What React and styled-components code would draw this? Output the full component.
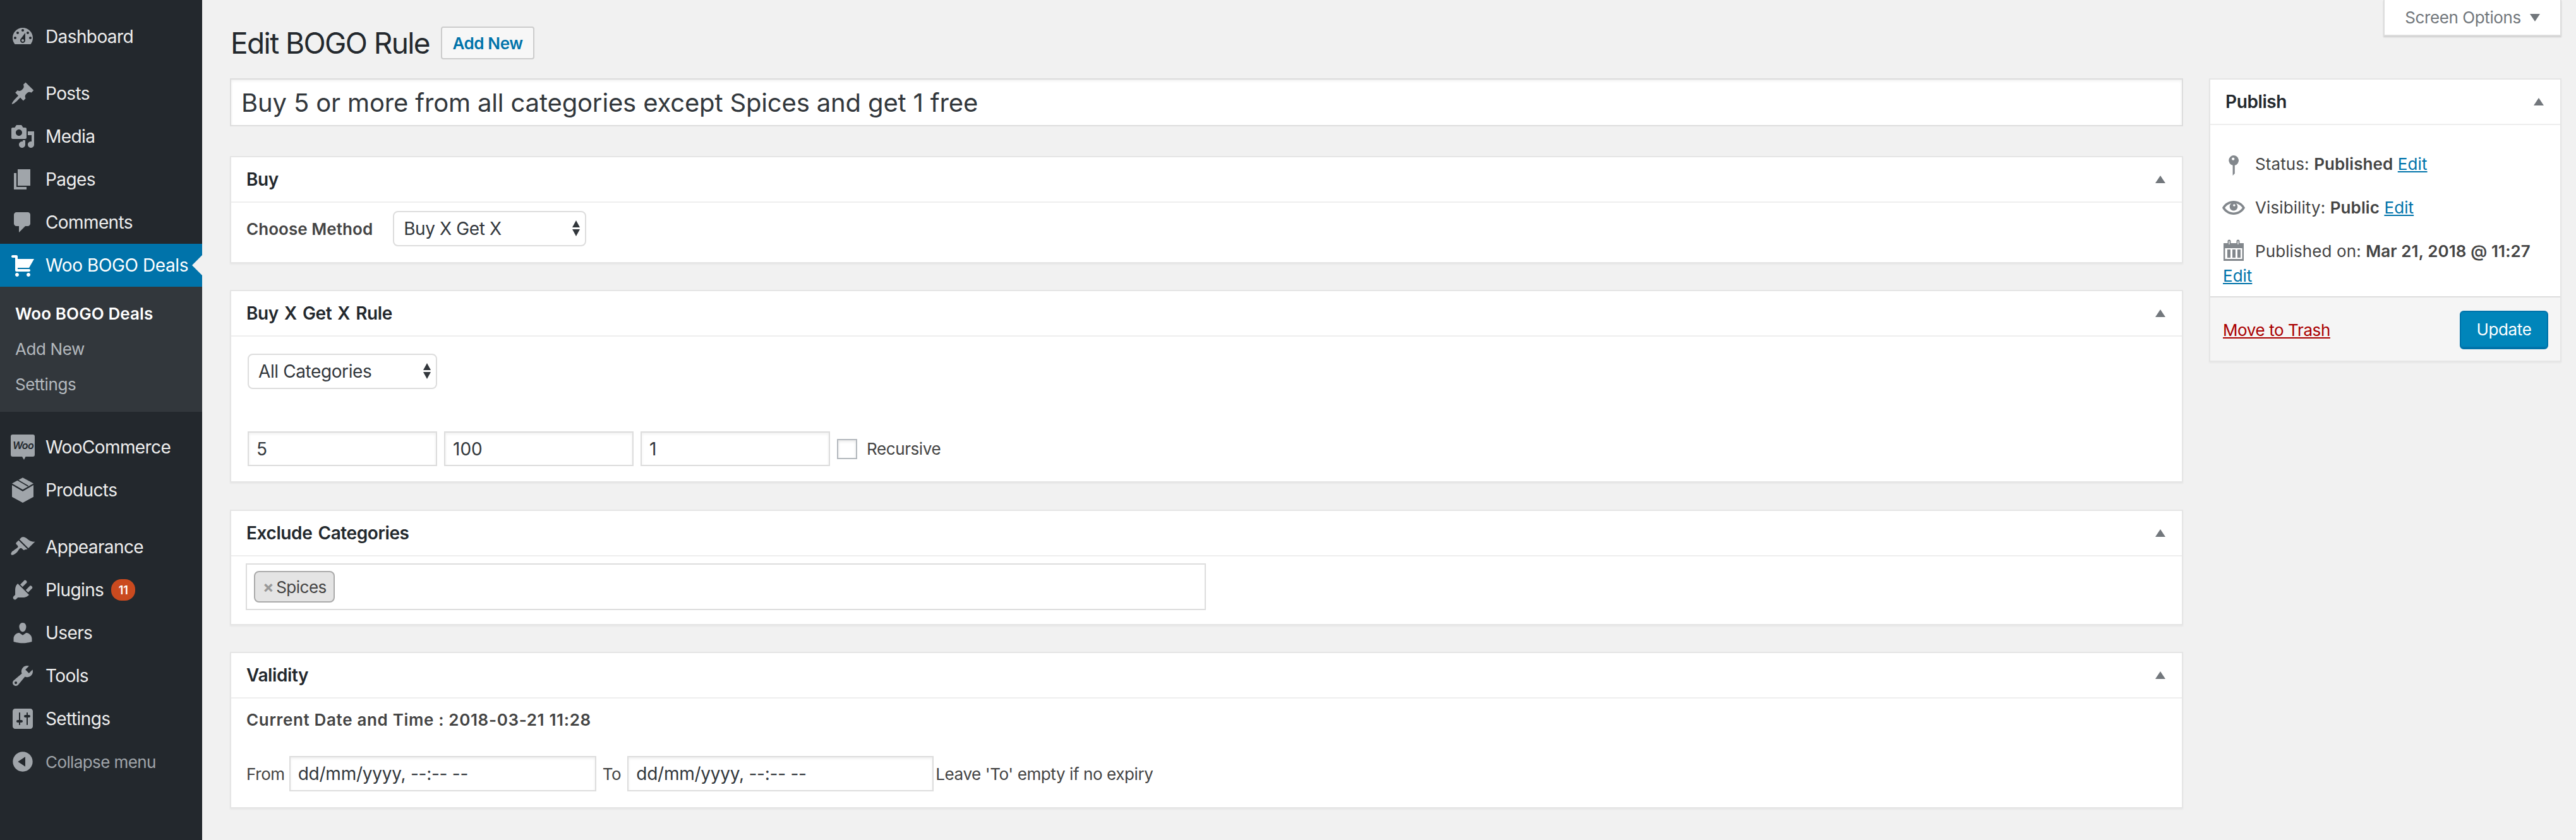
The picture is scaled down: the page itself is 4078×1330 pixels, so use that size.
import styled, { createGlobalStyle } from "styled-components";

const GlobalStyle = createGlobalStyle`
  html, body {
    margin: 0;
    padding: 0;
    background: #f1f1f1;
  }
  * {
    box-sizing: border-box;
  }
  body {
    font-family: Inter, "Liberation Sans", sans-serif;
    font-size: 26px;
    color: #444;
  }
`;

const Page = styled.div`
  display: flex;
  width: 4078px;
  height: 1330px;
  overflow: hidden;
`;

const Sidebar = styled.nav`
  flex: 0 0 320px;
  background: #23282d;
  padding-top: 24px;
`;

const MenuGroup = styled.div`
  margin-bottom: 22px;
`;

const MenuItem = styled.div`
  position: relative;
  display: flex;
  align-items: center;
  height: 68px;
  padding-left: 16px;
  font-size: ${(props) => (props.$muted ? 26 : 28)}px;
  letter-spacing: ${(props) => (props.$active ? "-0.4px" : "-0.6px")};
  color: ${(props) => (props.$active ? "#fff" : props.$muted ? "#a0a5aa" : "#eee")};
  background: ${(props) => (props.$active ? "#0073aa" : "transparent")};
`;

const MenuIcon = styled.svg`
  flex: 0 0 40px;
  width: 40px;
  height: 40px;
  margin-right: 16px;
  fill: ${(props) => (props.$active ? "#fff" : "#a0a5aa")};
`;

const ActiveArrow = styled.span`
  position: absolute;
  right: 0;
  top: 18px;
  border: 16px solid transparent;
  border-right-color: #f1f1f1;
  border-left-width: 0;
`;

const Badge = styled.span`
  display: inline-flex;
  align-items: center;
  justify-content: center;
  width: 38px;
  height: 34px;
  margin-left: 12px;
  border-radius: 16px;
  background: #ca4a1f;
  color: #fff;
  font-size: 18px;
  font-weight: 600;
  letter-spacing: 0;
`;

const Submenu = styled.div`
  background: #32373c;
  padding: 14px 0 16px;
  margin-bottom: 22px;
`;

const SubItem = styled.div`
  display: flex;
  align-items: center;
  height: 56px;
  padding-left: 24px;
  font-size: 26px;
  letter-spacing: ${(props) => (props.$current ? "0.1px" : "-0.4px")};
  font-weight: ${(props) => (props.$current ? 600 : 400)};
  color: ${(props) => (props.$current ? "#fff" : "#b4b9be")};
`;

const Content = styled.main`
  position: relative;
  flex: 1;
  padding: 0 23px 0 44px;
`;

const ScreenOptions = styled.div`
  position: absolute;
  top: 0;
  right: 23px;
  width: 282px;
  height: 57px;
  display: flex;
  align-items: center;
  justify-content: center;
  gap: 14px;
  background: #fff;
  border: 2px solid #ddd;
  border-top: 0;
  box-shadow: 0 2px 2px rgba(0, 0, 0, 0.14);
  color: #72777c;
  font-size: 26px;
  letter-spacing: -0.4px;
`;

const Caret = styled.span`
  width: 0;
  height: 0;
  border-left: 8px solid transparent;
  border-right: 8px solid transparent;
  ${(props) => (props.$up ? "border-bottom" : "border-top")}: 12px solid #72777c;
`;

const TitleRow = styled.div`
  display: flex;
  align-items: center;
  height: 124px;
  padding: 12px 0 0 1px;
`;

const PageTitle = styled.h1`
  margin: 0;
  font-size: 46px;
  font-weight: 400;
  letter-spacing: -1.6px;
  color: #23282d;
`;

const AddNew = styled.a`
  display: flex;
  align-items: center;
  justify-content: center;
  width: 148px;
  height: 52px;
  margin-left: 18px;
  background: #f7f7f7;
  border: 2px solid #ccc;
  border-radius: 4px;
  color: #0073aa;
  font-size: 26px;
  font-weight: 600;
  letter-spacing: -0.4px;
`;

const Columns = styled.div`
  display: flex;
  gap: 41px;
`;

const MainColumn = styled.div`
  flex: 0 0 3092px;
  display: flex;
  flex-direction: column;
`;

const SideColumn = styled.div`
  flex: 1;
`;

const TitleInput = styled.input`
  display: block;
  width: 100%;
  height: 76px;
  margin-bottom: 47px;
  padding: 0 16px;
  background: #fff;
  border: 2px solid #ddd;
  outline: 0;
  box-shadow: inset 0 2px 4px rgba(0, 0, 0, 0.07);
  color: #32373c;
  font-family: inherit;
  font-size: 40px;
  letter-spacing: -0.15px;
`;

const Box = styled.section`
  display: flex;
  flex-direction: column;
  background: #fff;
  border: 2px solid #e5e5e5;
  box-shadow: 0 2px 2px rgba(0, 0, 0, 0.04);
  height: ${(props) => props.$height}px;
  margin-bottom: ${(props) => props.$gap || 0}px;
  color: #444;
`;

const BoxHead = styled.div`
  flex: 0 0 72px;
  display: flex;
  align-items: center;
  justify-content: space-between;
  padding: 0 26px 0 24px;
  border-bottom: 2px solid #eee;
`;

const BoxTitle = styled.h2`
  margin: 0;
  font-size: 28px;
  font-weight: 600;
  letter-spacing: -0.4px;
  word-spacing: 2.5px;
  color: #23282d;
`;

const BoxBody = styled.div`
  flex: 1;
  display: flex;
  flex-direction: column;
  align-items: flex-start;
  padding: ${(props) => props.$pad || "0 24px"};
`;

const FieldRow = styled.div`
  display: flex;
  align-items: center;
  gap: ${(props) => props.$gap || 0}px;
  margin-top: ${(props) => props.$top || 0}px;
`;

const FieldLabel = styled.span`
  font-weight: 600;
  letter-spacing: ${(props) => props.$spacing || "0.05px"};
`;

const PlainLabel = styled.span`
  letter-spacing: -0.4px;
  margin: ${(props) => props.$margin || 0};
`;

const SelectBox = styled.div`
  position: relative;
  display: flex;
  align-items: center;
  width: ${(props) => props.$width}px;
  height: 56px;
  padding-left: 15px;
  background: #fff;
  border: 2px solid #ddd;
  border-radius: 8px;
  color: #32373c;
  font-size: 28px;
  letter-spacing: -0.4px;
`;

const Stepper = styled.span`
  position: absolute;
  right: 8px;
  top: 13px;
  display: flex;
  flex-direction: column;
  gap: 3px;
`;

const StepUp = styled.span`
  border-left: 6px solid transparent;
  border-right: 6px solid transparent;
  border-bottom: 11px solid #32373c;
`;

const StepDown = styled(StepUp)`
  border-bottom: 0;
  border-top: 11px solid #32373c;
`;

const TextField = styled.div`
  display: flex;
  align-items: center;
  width: ${(props) => props.$width}px;
  height: ${(props) => props.$height || 55}px;
  padding-left: 12px;
  background: #fff;
  border: 2px solid #ddd;
  box-shadow: inset 0 2px 4px rgba(0, 0, 0, 0.07);
  color: #32373c;
  font-size: 28px;
  letter-spacing: ${(props) => props.$spacing || 0};
`;

const Checkbox = styled.span`
  width: 32px;
  height: 32px;
  margin: 0 4px 0 0;
  background: #fff;
  border: 2px solid #b4b9be;
  box-shadow: inset 0 2px 4px rgba(0, 0, 0, 0.1);
`;

const TagField = styled.div`
  display: flex;
  align-items: center;
  width: 1520px;
  height: 74px;
  padding-left: 11px;
  background: #fff;
  border: 2px solid #ddd;
`;

const Tag = styled.span`
  display: flex;
  align-items: center;
  height: 50px;
  padding: 0 11px 0 12px;
  background: #e4e4e4;
  border: 2px solid #aaa;
  border-radius: 8px;
  letter-spacing: -0.5px;
  color: #444;
`;

const TagRemove = styled.span`
  margin-right: 4px;
  color: #999;
  font-weight: 700;
`;

const StatusRow = styled.div`
  display: flex;
  align-items: center;
  height: 69px;
  letter-spacing: 0.1px;
`;

const StatusIcon = styled.svg`
  flex: 0 0 40px;
  width: 40px;
  height: 40px;
  margin-right: 14px;
  fill: #82878c;
  fill-rule: evenodd;
`;

const Strong = styled.strong`
  font-weight: 600;
`;

const EditLink = styled.a`
  color: #0073aa;
  text-decoration: underline;
  margin-top: ${(props) => props.$top || 0}px;
  margin-left: ${(props) => props.$left || 0}px;
`;

const PublishFooter = styled.div`
  flex: 0 0 102px;
  display: flex;
  align-items: center;
  justify-content: space-between;
  padding: 3px 19px 0 20px;
  background: #f5f5f5;
  border-top: 2px solid #ddd;
`;

const TrashLink = styled.a`
  color: #a00;
  text-decoration: underline;
  letter-spacing: -0.4px;
`;

const UpdateButton = styled.button`
  width: 140px;
  height: 61px;
  background: #0085ba;
  border: 2px solid #0073aa;
  border-bottom-width: 4px;
  border-radius: 6px;
  color: #fff;
  font-family: inherit;
  font-size: 26px;
  letter-spacing: -0.4px;
`;

const icons = {
  dashboard:
    "M3.76 16h12.48c1.1-1.37 1.76-3.11 1.76-5 0-4.42-3.58-8-8-8s-8 3.58-8 8c0 1.89.66 3.63 1.76 5zM10 4c.55 0 1 .45 1 1s-.45 1-1 1-1-.45-1-1 .45-1 1-1zM6 6c.55 0 1 .45 1 1s-.45 1-1 1-1-.45-1-1 .45-1 1-1zm8 0c.55 0 1 .45 1 1s-.45 1-1 1-1-.45-1-1 .45-1 1-1zm-5.37 5.55L12 7v6c0 1.1-.9 2-2 2s-2-.9-2-2c0-.57.24-1.08.63-1.45zM4 10c.55 0 1 .45 1 1s-.45 1-1 1-1-.45-1-1 .45-1 1-1zm12 0c.55 0 1 .45 1 1s-.45 1-1 1-1-.45-1-1 .45-1 1-1zm-5 3c0-.55-.45-1-1-1s-1 .45-1 1 .45 1 1 1 1-.45 1-1z",
  posts:
    "M10.44 3.02l1.82-1.82 6.36 6.35-1.83 1.82c-1.05-.68-2.48-.57-3.41.36l-.75.75c-.92.93-1.04 2.35-.35 3.41l-1.83 1.82-2.41-2.41-2.8 2.79c-.42.42-3.38 2.71-3.8 2.29s1.86-3.39 2.28-3.81l2.79-2.79L4.1 9.36l1.83-1.82c1.05.69 2.48.57 3.4-.36l.75-.75c.93-.92 1.05-2.35.36-3.41z",
  media:
    "M13 11V4c0-.55-.45-1-1-1h-1.67L9 1H5L3.67 3H2c-.55 0-1 .45-1 1v7c0 .55.45 1 1 1h10c.55 0 1-.45 1-1zM7 4.5c1.38 0 2.5 1.12 2.5 2.5S8.38 9.5 7 9.5 4.5 8.38 4.5 7 5.62 4.5 7 4.5zM14 6h5v10.5c0 1.38-1.12 2.5-2.5 2.5S14 17.88 14 16.5s1.12-2.5 2.5-2.5c.17 0 .34.02.5.05V9h-3V6zm-4 8.05V13h2v3.5c0 1.38-1.12 2.5-2.5 2.5S7 17.88 7 16.5 8.12 14 9.5 14c.17 0 .34.02.5.05z",
  pages: "M6 15V2h10v13H6zm-1 1h8v2H3V5h2v11z",
  comments:
    "M5 2h9c1.1 0 2 .9 2 2v7c0 1.1-.9 2-2 2h-2l-5 5v-5H5c-1.1 0-2-.9-2-2V4c0-1.1.9-2 2-2z",
  cart:
    "M6 13h9c.55 0 1 .45 1 1s-.45 1-1 1H5c-.55 0-1-.45-1-1V4H2c-.55 0-1-.45-1-1s.45-1 1-1h3c.55 0 1 .45 1 1v2h13l-4 7H6v1zm-.5 3c.83 0 1.5.67 1.5 1.5S6.33 19 5.5 19 4 18.33 4 17.5 4.67 16 5.5 16zm9 0c.83 0 1.5.67 1.5 1.5s-.67 1.5-1.5 1.5-1.5-.67-1.5-1.5.67-1.5 1.5-1.5z",
  appearance:
    "M14.48 11.06L7.41 3.99l1.5-1.5c.5-.56 2.3-.47 3.51.32 1.21.8 1.43 1.28 2.91 2.1 1.18.64 2.45 1.26 4.45.85zm-.71.71L6.7 4.7 4.93 6.47c-.39.39-.39 1.02 0 1.41l1.06 1.06c.39.39.39 1.03 0 1.42-.6.6-1.43 1.11-2.21 1.69-.35.26-.7.53-1.01.84C1.43 13.23.18 15.35.97 16.14s2.93-.44 4.27-1.81c.31-.31.58-.65.84-1 .58-.78 1.09-1.61 1.69-2.21.39-.39 1.02-.39 1.41 0l1.06 1.06c.39.39 1.02.39 1.41 0z",
  plugins:
    "M13.11 4.36L9.87 7.6 8 5.73l3.24-3.24c.35-.34 1.05-.2 1.56.32.52.51.66 1.21.31 1.55zm-8 1.77l.91-1.12 9.01 9.01-1.19.84c-.71.71-2.63 1.16-3.82 1.16H6.14L4.9 17.26c-.59.59-1.54.59-2.12 0-.59-.58-.59-1.53 0-2.12l1.24-1.24v-3.88c0-1.13.4-3.19 1.09-3.89zm7.26 3.97l3.24-3.24c.34-.35 1.04-.21 1.55.31.52.51.66 1.21.31 1.55l-3.24 3.25z",
  users:
    "M10 9.25c-2.27 0-2.73-3.44-2.73-3.44C7 4.02 7.82 2 9.97 2c2.16 0 2.98 2.02 2.71 3.81 0 0-.41 3.44-2.68 3.44zm0 2.57L12.72 10c2.39 0 4.52 2.33 4.52 4.53v2.49s-3.65 1.13-7.24 1.13c-3.65 0-7.24-1.13-7.24-1.13v-2.49c0-2.25 1.94-4.48 4.47-4.48z",
  tools:
    "M16.68 9.77c-1.34 1.34-3.3 1.67-4.95.99l-5.41 6.52c-.99.99-2.59.99-3.58 0s-.99-2.59 0-3.57l6.52-5.42c-.68-1.65-.35-3.61.99-4.95 1.28-1.28 3.12-1.62 4.72-1.06l-2.89 2.89 2.82 2.82 2.86-2.87c.53 1.58.18 3.39-1.08 4.65zM3.81 16.21c.4.39 1.04.39 1.43 0 .4-.4.4-1.04 0-1.43-.39-.4-1.03-.4-1.43 0-.39.39-.39 1.03 0 1.43z",
  settings:
    "M18 16V4c0-1.1-.9-2-2-2H4c-1.1 0-2 .9-2 2v12c0 1.1.9 2 2 2h12c1.1 0 2-.9 2-2zM8 11h1c.55 0 1 .45 1 1s-.45 1-1 1H8v1.5c0 .28-.22.5-.5.5s-.5-.22-.5-.5V13H6c-.55 0-1-.45-1-1s.45-1 1-1h1V5.5c0-.28.22-.5.5-.5s.5.22.5.5V11zm5-2h-1c-.55 0-1-.45-1-1s.45-1 1-1h1V5.5c0-.28.22-.5.5-.5s.5.22.5.5V7h1c.55 0 1 .45 1 1s-.45 1-1 1h-1v5.5c0 .28-.22.5-.5.5s-.5-.22-.5-.5V9z",
  collapse:
    "M10 2.16c4.33 0 7.84 3.51 7.84 7.84s-3.51 7.84-7.84 7.84S2.16 14.33 2.16 10 5.71 2.16 10 2.16zm2 11.72V6.12L6.18 9.97z",
  pin: "M10 3a4 4 0 0 1 .9 7.9V17.4L9.3 19V10.9A4 4 0 0 1 10 3zM9.6 4.7a1.1 1.1 0 1 0 0 2.2 1.1 1.1 0 0 0 0-2.2z",
  eye: "M19.7 9.4C17.7 6 14 3.9 10 3.9S2.3 6 .3 9.4L0 10l.3.6c2 3.4 5.7 5.5 9.7 5.5s7.7-2.1 9.7-5.5l.3-.6-.3-.6zM10 14.1c-3.1 0-6-1.6-7.7-4.1C3.6 8 5.7 6.6 8 6.1c-.9.6-1.5 1.7-1.5 2.9 0 1.9 1.6 3.5 3.5 3.5s3.5-1.6 3.5-3.5c0-1.2-.6-2.3-1.5-2.9 2.3.5 4.4 1.9 5.7 3.9-1.7 2.5-4.6 4.1-7.7 4.1zM10.5 6.8a1 1 0 1 0 0 2 1 1 0 0 0 0-2z",
  calendar:
    "M2 3.5H5.25V2a1.25 1.25 0 0 1 2.5 0V3.5H12.25V2a1.25 1.25 0 0 1 2.5 0V3.5H18V17.5H2zM3.2 7.5V16H16.8V7.5zM6.2 2V4.5H6.8V2zM13.2 2V4.5H13.8V2zM5 8.5H7.5V15H5zM9 8.5H11.5V15H9zM13 8.5H15.5V15H13z",
};

const Icon = ({ name, active }) => (
  <MenuIcon viewBox="0 0 20 20" $active={active}>
    <path d={icons[name]} />
  </MenuIcon>
);

const WooIcon = () => (
  <MenuIcon viewBox="0 0 40 40">
    <path d="M4 0h32a3 3 0 0 1 3 3v29a3 3 0 0 1-3 3H24.5L22 40l-3-5H4a3 3 0 0 1-3-3V3a3 3 0 0 1 3-3z" />
    <text
      x="20.5"
      y="23"
      fontSize="16"
      fontWeight="600"
      fontStyle="italic"
      textAnchor="middle"
      fill="#23282d"
    >
      Woo
    </text>
  </MenuIcon>
);

const ProductsIcon = () => (
  <MenuIcon viewBox="0 0 20 20">
    <path d="M10 .1L18.5 4.7 10 9.6 1.5 4.7z" />
    <path d="M1.5 6L10 11 18.5 6V15.4L10 20 1.5 15.4z" />
    <path d="M5.8 1.9L14.3 6.9" stroke="#23282d" strokeWidth="0.8" fill="none" />
  </MenuIcon>
);

const topItems = [
  ["posts", "Posts"],
  ["media", "Media"],
  ["pages", "Pages"],
  ["comments", "Comments"],
];

const lowerItems = [
  ["users", "Users"],
  ["tools", "Tools"],
  ["settings", "Settings"],
];

const BoxHeader = ({ title }) => (
  <BoxHead>
    <BoxTitle>{title}</BoxTitle>
    <Caret $up />
  </BoxHead>
);

const Select = ({ width, label }) => (
  <SelectBox $width={width}>
    {label}
    <Stepper>
      <StepUp />
      <StepDown />
    </Stepper>
  </SelectBox>
);

const App = () => {
  return (
    <Page>
      <GlobalStyle />
      <Sidebar>
        <MenuGroup>
          <MenuItem>
            <Icon name="dashboard" />
            Dashboard
          </MenuItem>
        </MenuGroup>
        {topItems.map(([icon, label]) => (
          <MenuItem key={label}>
            <Icon name={icon} />
            {label}
          </MenuItem>
        ))}
        <MenuItem $active>
          <Icon name="cart" active />
          Woo BOGO Deals
          <ActiveArrow />
        </MenuItem>
        <Submenu>
          <SubItem $current>Woo BOGO Deals</SubItem>
          <SubItem>Add New</SubItem>
          <SubItem>Settings</SubItem>
        </Submenu>
        <MenuItem>
          <WooIcon />
          WooCommerce
        </MenuItem>
        <MenuGroup>
          <MenuItem>
            <ProductsIcon />
            Products
          </MenuItem>
        </MenuGroup>
        <MenuItem>
          <Icon name="appearance" />
          Appearance
        </MenuItem>
        <MenuItem>
          <Icon name="plugins" />
          Plugins
          <Badge>11</Badge>
        </MenuItem>
        {lowerItems.map(([icon, label]) => (
          <MenuItem key={label}>
            <Icon name={icon} />
            {label}
          </MenuItem>
        ))}
        <MenuItem $muted>
          <Icon name="collapse" />
          Collapse menu
        </MenuItem>
      </Sidebar>

      <Content>
        <ScreenOptions>
          Screen Options
          <Caret />
        </ScreenOptions>
        <TitleRow>
          <PageTitle>Edit BOGO Rule</PageTitle>
          <AddNew>Add New</AddNew>
        </TitleRow>
        <Columns>
          <MainColumn>
            <TitleInput readOnly value="Buy 5 or more from all categories except Spices and get 1 free" />

            <Box $height={170} $gap={42}>
              <BoxHeader title="Buy" />
              <BoxBody>
                <FieldRow $top={13} $gap={32}>
                  <FieldLabel>Choose Method</FieldLabel>
                  <Select width={306} label="Buy X Get X" />
                </FieldRow>
              </BoxBody>
            </Box>

            <Box $height={305} $gap={43}>
              <BoxHeader title="Buy X Get X Rule" />
              <BoxBody $pad="27px 26px 0">
                <Select width={300} label="All Categories" />
                <FieldRow $top={67} $gap={11}>
                  <TextField $width={300}>5</TextField>
                  <TextField $width={300}>100</TextField>
                  <TextField $width={300}>1</TextField>
                  <Checkbox />
                  <PlainLabel>Recursive</PlainLabel>
                </FieldRow>
              </BoxBody>
            </Box>

            <Box $height={183} $gap={42}>
              <BoxHeader title="Exclude Categories" />
              <BoxBody $pad="11px 23px 0">
                <TagField>
                  <Tag>
                    <TagRemove>×</TagRemove>
                    Spices
                  </Tag>
                </TagField>
              </BoxBody>
            </Box>

            <Box $height={248}>
              <BoxHeader title="Validity" />
              <BoxBody>
                <FieldRow $top={18}>
                  <FieldLabel $spacing="0.65px">Current Date and Time : 2018-03-21 11:28</FieldLabel>
                </FieldRow>
                <FieldRow $top={42}>
                  <PlainLabel $margin="0 7px 0 0">From</PlainLabel>
                  <TextField $width={486} $height={56} $spacing="-0.25px">
                    dd/mm/yyyy, --:-- --
                  </TextField>
                  <PlainLabel $margin="0 10px">To</PlainLabel>
                  <TextField $width={485} $height={56} $spacing="-0.25px">
                    dd/mm/yyyy, --:-- --
                  </TextField>
                  <PlainLabel $margin="0 0 0 3px">Leave 'To' empty if no expiry</PlainLabel>
                </FieldRow>
              </BoxBody>
            </Box>
          </MainColumn>

          <SideColumn>
            <Box $height={449}>
              <BoxHeader title="Publish" />
              <BoxBody $pad="27px 17px 0">
                <StatusRow>
                  <StatusIcon viewBox="0 0 20 20">
                    <path d={icons.pin} />
                  </StatusIcon>
                  <span>
                    Status: <Strong>Published</Strong> <EditLink>Edit</EditLink>
                  </span>
                </StatusRow>
                <StatusRow>
                  <StatusIcon viewBox="-1.1 -1.1 22.2 22.2">
                    <path d={icons.eye} />
                  </StatusIcon>
                  <span>
                    Visibility: <Strong>Public</Strong> <EditLink>Edit</EditLink>
                  </span>
                </StatusRow>
                <StatusRow>
                  <StatusIcon viewBox="0 0 20 20">
                    <path d={icons.calendar} />
                  </StatusIcon>
                  <span>
                    Published on: <Strong>Mar 21, 2018 @ 11:27</Strong>
                  </span>
                </StatusRow>
                <EditLink $top={-11} $left={3}>Edit</EditLink>
              </BoxBody>
              <PublishFooter>
                <TrashLink>Move to Trash</TrashLink>
                <UpdateButton>Update</UpdateButton>
              </PublishFooter>
            </Box>
          </SideColumn>
        </Columns>
      </Content>
    </Page>
  );
};

export default App;
